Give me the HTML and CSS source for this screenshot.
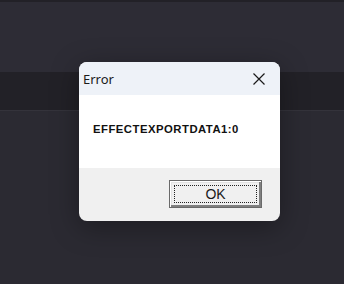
FILE: index.html
```html
<!DOCTYPE html>
<html lang="en">
<head>
    <meta charset="UTF-8">
    <title>Error</title>
    <link rel="stylesheet" href="styles.css">
</head>
<body>
    <div class="app">
        <div class="top-strip"></div>
        <div class="toolbar"></div>
        <div class="band"></div>
        <div class="workspace"></div>
    </div>

    <!-- Fehlerdialog -->
    <div class="dialog">
        <div class="titlebar">
            <span class="title">Error</span>
            <svg class="close" width="14" height="14" viewBox="0 0 14 14">
                <path d="M1.5 1.5 L12.5 12.5 M12.5 1.5 L1.5 12.5" stroke="#1a1a1a" stroke-width="1.2" fill="none"/>
            </svg>
        </div>
        <div class="message">EFFECTEXPORTDATA1:0</div>
        <div class="buttons">
            <button class="ok"><span class="focus">OK</span></button>
        </div>
    </div>
</body>
</html>
```

FILE: styles.css
```css
* {
    margin: 0;
    padding: 0;
    box-sizing: border-box;
}

body {
    width: 344px;
    height: 284px;
    overflow: hidden;
    background: #2c2b34;
    font-family: 'Noto Sans', sans-serif;
}

.app {
    display: flex;
    flex-direction: column;
    height: 100%;
}

.top-strip {
    height: 2px;
    background: #222127;
}

.toolbar {
    height: 70px;
    background: #2d2c35;
}

.band {
    height: 39px;
    background: #222127;
    border-bottom: 1px solid #34333b;
}

.workspace {
    flex: 1;
    background: #2b2a32;
}

/* Dialogfenster */
.dialog {
    position: absolute;
    left: 79px;
    top: 62px;
    width: 201px;
    height: 159px;
    border-radius: 8px;
    overflow: hidden;
    background: #f0f0f0;
    box-shadow: 0 6px 28px rgba(0, 0, 0, 0.35);
    display: flex;
    flex-direction: column;
}

.titlebar {
    height: 33px;
    background: #eef2f8;
    display: flex;
    align-items: center;
    justify-content: space-between;
    padding: 0 14px 0 4px;
}

.title {
    font-size: 13px;
    color: #1a1a1a;
}

.close {
    display: block;
}

.message {
    height: 73px;
    background: #ffffff;
    padding: 28px 0 0 14px;
    font-family: 'Liberation Sans', Arial, sans-serif;
    font-weight: bold;
    font-size: 11.3px;
    letter-spacing: 0.5px;
    color: #111111;
}

.buttons {
    flex: 1;
    display: flex;
    justify-content: flex-end;
    padding: 12px 18px 0 0;
}

.ok {
    width: 93px;
    height: 28px;
    background: #f0f0f0;
    border: 1px solid #6a6a6a;
    box-shadow: inset 1px 1px 0 #ffffff, inset -2px -2px 0 #808080, inset 2px 2px 0 #e3e3e3;
    padding: 4px;
    font-family: 'Liberation Sans', Arial, sans-serif;
    font-size: 14px;
    color: #1a1a1a;
}

.focus {
    display: block;
    height: 100%;
    border: 1px dotted #222222;
    line-height: 16px;
}
```
